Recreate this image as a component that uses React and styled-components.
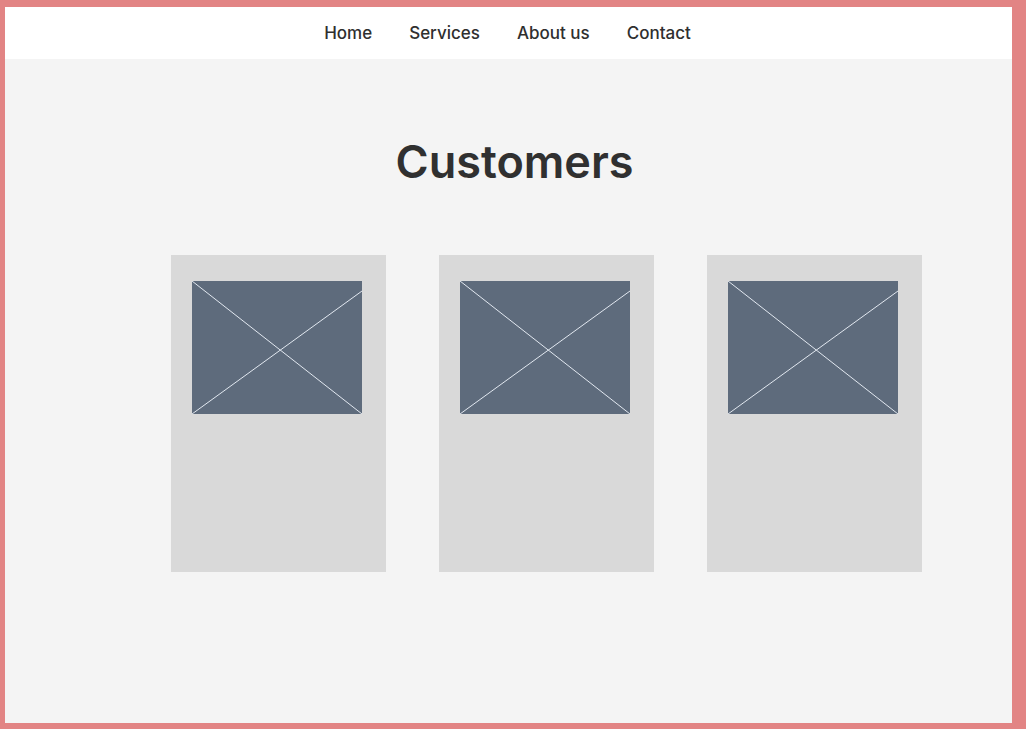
import styled, { createGlobalStyle } from 'styled-components';

const GlobalStyle = createGlobalStyle`
  html, body {
    margin: 0;
    padding: 0;
  }
  body {
    font-family: Inter, 'Noto Sans', sans-serif;
    color: #333;
  }
`;

const Frame = styled.div`
  box-sizing: border-box;
  width: 1026px;
  height: 729px;
  border-style: solid;
  border-color: #e28484;
  border-width: 7px 14px 6px 5px;
  background: #f4f4f4;
  display: flex;
  flex-direction: column;
`;

const Nav = styled.nav`
  height: 52px;
  background: #fff;
  display: flex;
  justify-content: center;
  align-items: center;
  gap: 37px;
  padding-right: 2px;
`;

const NavLink = styled.a`
  font-size: 17px;
  font-weight: 500;
  color: #2f2f2f;
  text-decoration: none;
`;

const Title = styled.h1`
  margin: 76px 0 0;
  text-align: center;
  font-size: 45px;
  line-height: 1.2;
  font-weight: 600;
  color: #303030;
  padding-left: 12px;
`;

const Cards = styled.div`
  margin-top: 66px;
  padding-left: 166px;
  display: flex;
  gap: 53px;
`;

const Card = styled.div`
  width: 215px;
  height: 317px;
  background: #d9d9d9;
  padding: 26px 0 0 21px;
  box-sizing: border-box;
`;

const Thumb = styled.svg`
  display: block;
  width: 170px;
  height: 133px;
`;

function Placeholder() {
  return (
    <Thumb viewBox="0 0 170 133">
      <rect width="170" height="133" fill="#5e6b7c" />
      <line x1="0" y1="0" x2="170" y2="133" stroke="#e2e8f0" strokeWidth="1" />
      <line x1="0" y1="133" x2="170" y2="10" stroke="#e2e8f0" strokeWidth="1" />
    </Thumb>
  );
}

export default function App() {
  const links = ['Home', 'Services', 'About us', 'Contact'];
  return (
    <>
      <GlobalStyle />
      <Frame>
        <Nav>
          {links.map((l) => (
            <NavLink key={l} href="#">{l}</NavLink>
          ))}
        </Nav>
        <Title>Customers</Title>
        <Cards>
          {[0, 1, 2].map((i) => (
            <Card key={i}>
              <Placeholder />
            </Card>
          ))}
        </Cards>
      </Frame>
    </>
  );
}
